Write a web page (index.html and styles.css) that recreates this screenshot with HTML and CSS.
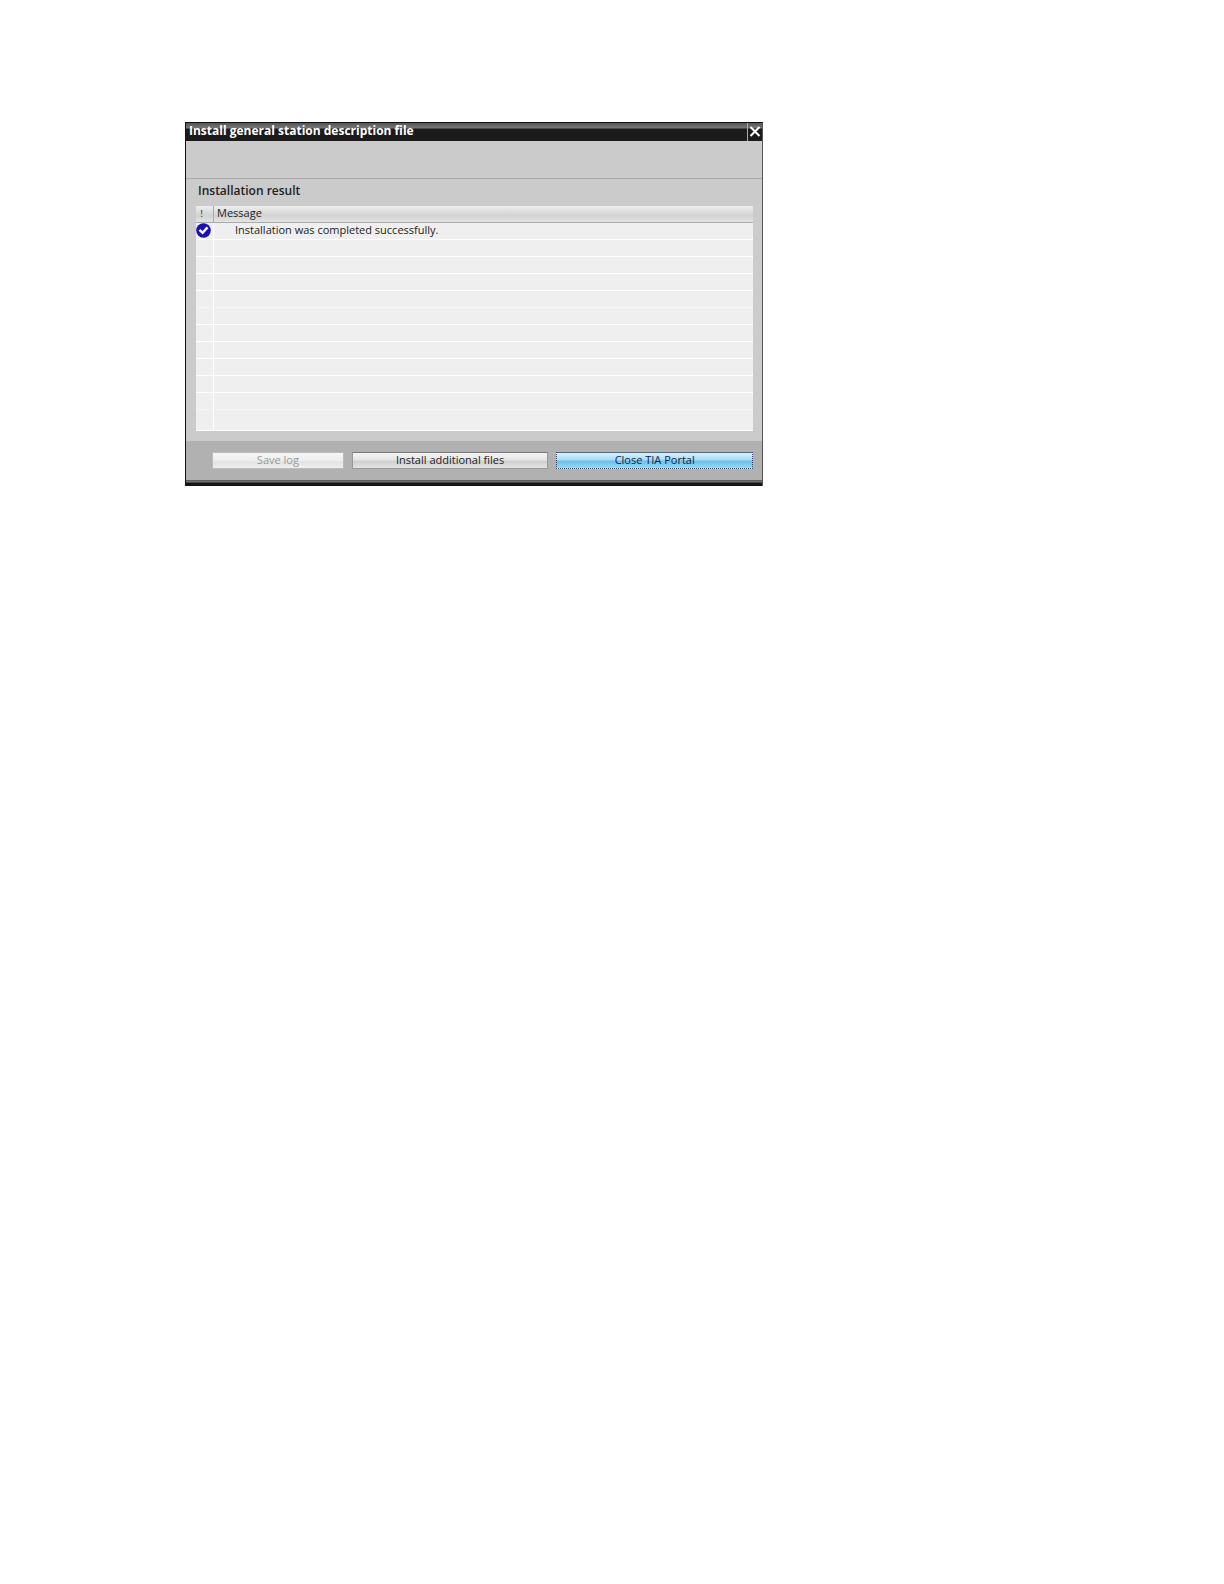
FILE: index.html
```html
<!DOCTYPE html>
<html lang="en">

<head>
    <meta charset="UTF-8">
    <meta name="viewport" content="width=device-width, initial-scale=1.0">
    <title>Install general station description file</title>
    <link rel="stylesheet" href="styles.css">
</head>

<body>
    <main class="dialog">
        <header class="titlebar">
            <h1>Install general station description file</h1>
            <button class="close" aria-label="Close">
                <svg width="12" height="12" viewBox="0 0 12 12">
                    <path d="M1.5 1L10.5 10M10.5 1L1.5 10" stroke="#fff" stroke-width="2" fill="none"/>
                </svg>
            </button>
        </header>
        <div class="banner"></div>
        <section class="content">
            <h2>Installation result</h2>
            <table class="log">
                <thead>
                    <tr>
                        <th class="status">!</th>
                        <th>Message</th>
                    </tr>
                </thead>
                <tbody>
                    <tr>
                        <td class="status">
                            <svg class="ok" width="15" height="15" viewBox="0 0 15 15" role="img" aria-label="Success">
                                <circle cx="7.5" cy="7.5" r="7.3" fill="#1c10b4"/>
                                <path d="M3.5 6.8L6.6 9.8L11.5 4.4" stroke="#fff" stroke-width="2.4" fill="none"/>
                            </svg>
                        </td>
                        <td class="message">Installation was completed successfully.</td>
                    </tr>
                    <tr><td></td><td></td></tr>
                    <tr><td></td><td></td></tr>
                    <tr><td></td><td></td></tr>
                    <tr class="faint"><td></td><td></td></tr>
                    <tr><td></td><td></td></tr>
                    <tr><td></td><td></td></tr>
                    <tr><td></td><td></td></tr>
                    <tr><td></td><td></td></tr>
                    <tr><td></td><td></td></tr>
                    <tr class="faint"><td></td><td></td></tr>
                    <tr class="last"><td></td><td></td></tr>
                </tbody>
            </table>
        </section>
        <footer class="actions">
            <button class="btn save" disabled>Save log</button>
            <button class="btn">Install additional files</button>
            <button class="btn primary">Close TIA Portal</button>
        </footer>
        <div class="bottom-edge"></div>
    </main>
</body>

</html>
```
FILE: styles.css
```css
* {
    margin: 0;
    padding: 0;
    box-sizing: border-box;
}

body {
    background-color: #fff;
    padding: 122px 185px;
    font-family: "Open Sans", "Noto Sans", sans-serif;
    font-size: 11px;
    color: #222;
}

.dialog {
    max-width: 578px;
    border: 1px solid #111;
    border-right-color: #555;
    border-bottom: none;
    background-color: #cbcbcb;
}

.titlebar {
    display: flex;
    justify-content: space-between;
    height: 18px;
    background: linear-gradient(#555 0, #777 5px, #1b1b1b 6px, #1b1b1b 100%);
}

.titlebar h1 {
    padding-left: 3px;
    font-size: 12px;
    font-weight: 700;
    line-height: 16px;
    color: #fff;
}

.close {
    display: flex;
    justify-content: center;
    align-items: center;
    width: 15px;
    border: none;
    border-left: 1px solid #aaa;
    background: none;
}

.banner {
    height: 38px;
    border-bottom: 1px solid #aaa;
}

.content {
    padding: 4px 9px 10px 10px;
}

.content h2 {
    padding-left: 2px;
    font-size: 12px;
    font-weight: 600;
    line-height: 16px;
    margin-bottom: 7px;
    color: #222;
}

.log {
    width: 100%;
    table-layout: fixed;
    border-collapse: separate;
    border-spacing: 0;
    background-color: #efefef;
}

.log th {
    height: 17px;
    padding-left: 3px;
    border-bottom: 1px solid #aaa;
    background: linear-gradient(#eee, #d2d2d2 60%, #e4e4e4);
    font-weight: 400;
    line-height: 14px;
    vertical-align: top;
    text-align: left;
}

.log th.status {
    width: 18px;
    padding: 0 6px 0 0;
    border-right: 1px solid #aaa;
    font-family: "Liberation Serif", serif;
    color: #444;
    text-align: center;
}

.log td {
    height: 17px;
    border-bottom: 1px solid #fff;
    line-height: 14px;
    vertical-align: top;
}

.log td:first-child {
    border-right: 1px solid #fff;
}

.log td.message {
    padding-left: 21px;
}

.log .faint td {
    border-bottom-color: #f4f4f4;
}

.log .last td {
    height: 21px;
}

.ok {
    display: block;
}

.actions {
    display: flex;
    gap: 8px;
    padding: 11px 9px 11px 26px;
    background-color: #b1b1b1;
}

.btn {
    flex: 3;
    height: 17px;
    padding-bottom: 2px;
    border: 1px solid #999;
    border-top-color: #777;
    background: linear-gradient(#f4f4f4, #e6e6e6 45%, #cfcfcf 55%, #e4e4e4);
    font-family: inherit;
    font-size: 11px;
    line-height: 13px;
    color: #222;
}

.btn.save {
    flex: 2;
    border-color: #bbb;
    background: linear-gradient(#f6f6f6, #eee 50%, #e2e2e2 60%, #f0f0f0);
    color: #999;
}

.btn.primary {
    border: 1px dotted #346;
    border-top: 1px solid #567;
    background: linear-gradient(#d5f1fd, #a9dcf6 45%, #6dbfe8 55%, #90dcfa);
    color: #124;
}

.bottom-edge {
    height: 6px;
    background: linear-gradient(#555 0, #777 2px, #151515 3px, #151515 100%);
}
```
